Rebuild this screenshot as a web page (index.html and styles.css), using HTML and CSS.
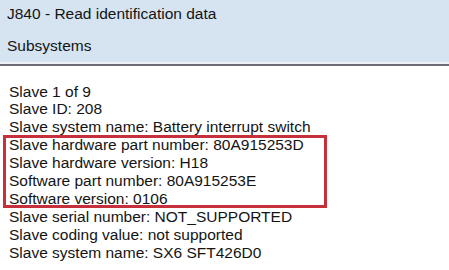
FILE: index.html
```html
<!DOCTYPE html>
<html>
<head>
<meta charset="utf-8">
<link rel="stylesheet" href="styles.css">
</head>
<body>
<div class="header">
  <div class="row">J840 - Read identification data</div>
  <div class="row">Subsystems</div>
</div>
<div class="sep"></div>
<div class="content">
  <div class="line">Slave 1 of 9</div>
  <div class="line">Slave ID: 208</div>
  <div class="line">Slave system name: Battery interrupt switch</div>
  <div class="highlight">
    <div class="line">Slave hardware part number: 80A915253D</div>
    <div class="line">Slave hardware version: H18</div>
    <div class="line">Software part number: 80A915253E</div>
    <div class="line">Software version: 0106</div>
  </div>
  <div class="line">Slave serial number: NOT_SUPPORTED</div>
  <div class="line">Slave coding value: not supported</div>
  <div class="line">Slave system name: SX6 SFT426D0</div>
</div>
</body>
</html>
```
FILE: styles.css
```css
html, body {
  margin: 0;
  padding: 0;
  background: #ffffff;
}
body {
  font-family: "Liberation Sans", Arial, sans-serif;
  font-size: 15.5px;
  color: #141414;
  width: 449px;
  height: 270px;
  overflow: hidden;
}
.header {
  background: #d6e4f2;
  height: 62px;
  box-sizing: border-box;
  padding: 1px 0 0 7px;
  display: flex;
  flex-direction: column;
  gap: 6px;
}
.row {
  line-height: 26px;
}
.sep {
  height: 2px;
  background: #eef2f7;
  border-bottom: 2px solid #6c6c74;
}
.content {
  padding: 16.5px 0 0 9px;
}
.line {
  line-height: 17.9px;
  white-space: nowrap;
}
.highlight {
  position: relative;
  width: 318px;
}
.highlight::after {
  content: "";
  position: absolute;
  left: -6px;
  right: 0;
  top: -1px;
  bottom: 0;
  border: 3px solid #c6303a;
  pointer-events: none;
}
```
